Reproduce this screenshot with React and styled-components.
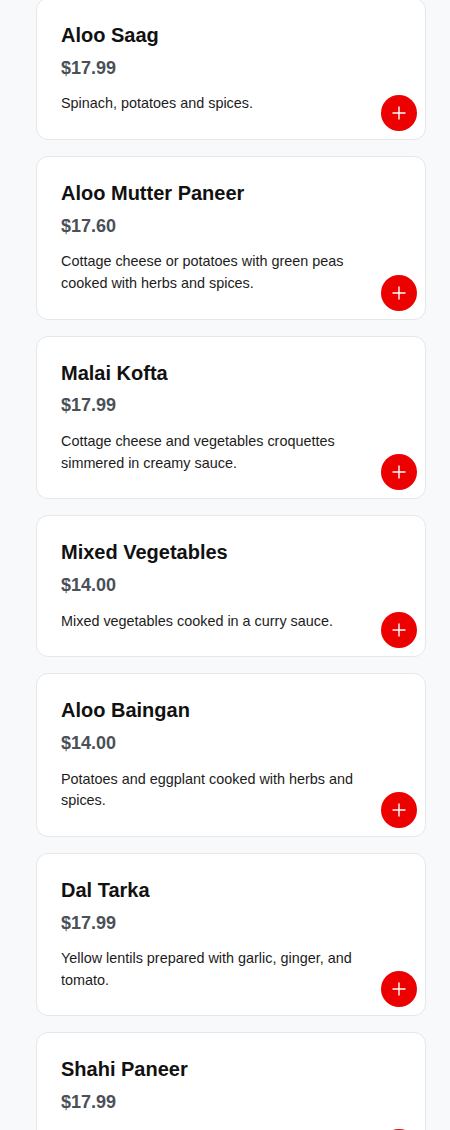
import styled, { createGlobalStyle } from 'styled-components';

const GlobalStyle = createGlobalStyle`
  * { box-sizing: border-box; }
  body {
    margin: 0;
    background: #f8f9fb;
    font-family: "Liberation Sans", Arial, sans-serif;
  }
`

const Page = styled.div`
  min-height: 1130px;
  background: #f8f9fb;
  padding: 0 24px 0 36px;
  overflow: hidden;
`

const MenuList = styled.div`
  display: flex;
  flex-direction: column;
  gap: 16px;
  margin-top: -2px;
`

const Card = styled.div`
  position: relative;
  background: #fff;
  border: 1px solid #e5e7eb;
  border-radius: 12px;
  padding: 24px;
`

const Title = styled.h3`
  margin: 0;
  font-size: 20px;
  line-height: 24px;
  font-weight: 700;
  color: #111;
`

const Price = styled.div`
  margin-top: 8.8px;
  font-size: 18px;
  line-height: 24px;
  font-weight: 700;
  color: #4b5057;
`

const Description = styled.p`
  margin: 13.6px 0 0;
  padding-right: 36px;
  font-size: 14.4px;
  line-height: 21.6px;
  color: #1c1c1c;
`

const AddButton = styled.button`
  position: absolute;
  right: 8px;
  bottom: 8px;
  width: 36px;
  height: 36px;
  border: none;
  border-radius: 50%;
  background: #ec0000;
  display: flex;
  align-items: center;
  justify-content: center;
  padding: 0;
  cursor: pointer;
`

const items = [
  { name: 'Aloo Saag', price: '$17.99', desc: 'Spinach, potatoes and spices.' },
  { name: 'Aloo Mutter Paneer', price: '$17.60', desc: 'Cottage cheese or potatoes with green peas cooked with herbs and spices.' },
  { name: 'Malai Kofta', price: '$17.99', desc: 'Cottage cheese and vegetables croquettes simmered in creamy sauce.' },
  { name: 'Mixed Vegetables', price: '$14.00', desc: 'Mixed vegetables cooked in a curry sauce.' },
  { name: 'Aloo Baingan', price: '$14.00', desc: 'Potatoes and eggplant cooked with herbs and spices.' },
  { name: 'Dal Tarka', price: '$17.99', desc: 'Yellow lentils prepared with garlic, ginger, and tomato.' },
  { name: 'Shahi Paneer', price: '$17.99', desc: 'Cottage cheese in creamy sauce.' },
]

function PlusIcon() {
  return (
    <svg width="14" height="14" viewBox="0 0 14 14" fill="none">
      <path d="M7 0.5v13M0.5 7h13" stroke="#fff" strokeWidth="1.4" />
    </svg>
  )
}

export default function App() {
  return (
    <>
      <GlobalStyle />
      <Page>
        <MenuList>
          {items.map((item) => (
            <Card key={item.name}>
              <Title>{item.name}</Title>
              <Price>{item.price}</Price>
              <Description>{item.desc}</Description>
              <AddButton aria-label={`Add ${item.name}`}>
                <PlusIcon />
              </AddButton>
            </Card>
          ))}
        </MenuList>
      </Page>
    </>
  )
}
